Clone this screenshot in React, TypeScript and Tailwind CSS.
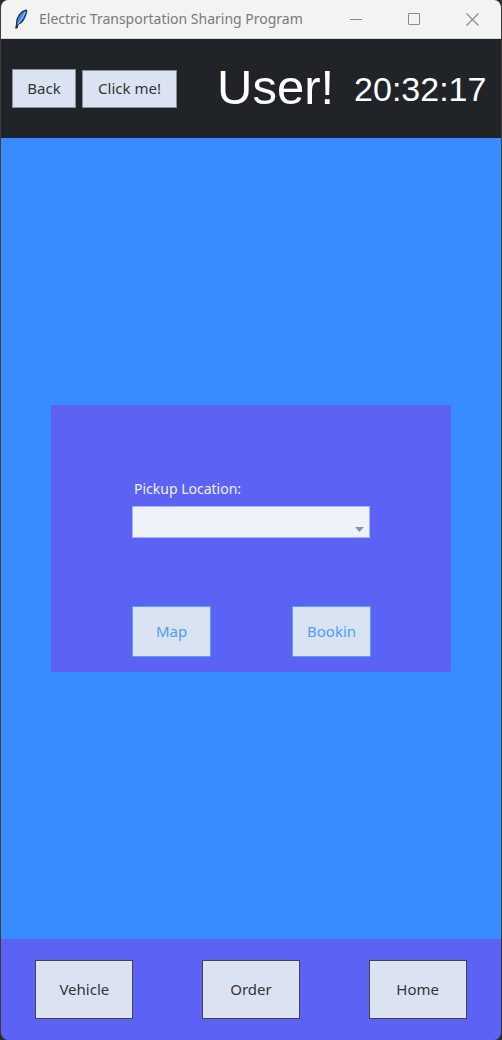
import React from "react";

function Feather() {
  return (
    <svg width="14" height="20" viewBox="0 0 14 20">
      <path d="M12 1 C6.5 2.5 2.5 8 2.6 14.5 L1.8 19 L3 19 L4 15.5 C9 13.5 11.5 8.5 12.8 1.8 Z" fill="#3b86ec" stroke="#17223a" strokeWidth="1.1" strokeLinejoin="round" />
      <path d="M11.5 2.8 L4 15.5" stroke="#a7d0ff" strokeWidth="0.9" />
    </svg>
  );
}

export default function App() {
  const ui = { fontFamily: '"Noto Sans", "Open Sans", sans-serif' };
  const arial = { fontFamily: '"Liberation Sans", Arial, sans-serif' };
  return (
    <div className="w-[502px] h-[1040px] bg-[#2a2a2a]">
      <div className="w-full h-full flex flex-col rounded-t-[8px] rounded-b-[8px] overflow-hidden border-x border-[#3d3d3d]" style={ui}>
        {/* Title bar */}
        <div className="h-[39px] shrink-0 bg-[#f3f3f3] border-b border-[#d6d6d6] flex items-center">
          <div className="w-[38px] flex justify-center pl-[2px]">
            <Feather />
          </div>
          <div className="text-[14px] text-[#7a7a7a] leading-none">Electric Transportation Sharing Program</div>
          <div className="flex-1" />
          <div className="flex items-center h-full">
            <div className="w-[58px] flex justify-center">
              <div className="w-[12px] h-[1px] bg-[#8a8a8a]" />
            </div>
            <div className="w-[58px] flex justify-center">
              <div className="w-[12px] h-[12px] border border-[#8a8a8a] rounded-[1px]" />
            </div>
            <div className="w-[58px] flex justify-center">
              <svg width="13" height="13" viewBox="0 0 13 13">
                <path d="M0.5 0.5 L12.5 12.5 M12.5 0.5 L0.5 12.5" stroke="#8a8a8a" strokeWidth="1.1" />
              </svg>
            </div>
          </div>
        </div>

        {/* Header */}
        <div className="h-[99px] shrink-0 bg-[#202328] flex items-center pl-[11px]">
          <button className="w-[64px] h-[39px] bg-[#dbe3f3] border border-[#8a8f99] text-[15px] text-[#333]">Back</button>
          <button className="ml-[6px] w-[95px] h-[38px] bg-[#dbe3f3] border border-[#8a8f99] text-[15px] text-[#333]">Click me!</button>
          <div className="ml-[40px] text-[49px] leading-none text-white pb-[2px]" style={arial}>User!</div>
          <div className="ml-[20px] text-[34px] leading-none text-white" style={arial}>20:32:17</div>
        </div>

        {/* Main */}
        <div className="flex-1 bg-[#388cff] flex items-center justify-center">
          <div className="w-[400px] h-[267px] bg-[#5c63f4] flex flex-col pl-[81px] pt-[74px]">
            <div className="pl-[2px] text-[14px] leading-[20px] text-[#eef0ff]">Pickup Location:</div>
            <div className="mt-[7px] w-[238px] h-[32px] bg-[#eef3f9] border border-[#a9b0ff] relative">
              <svg className="absolute right-[5px] bottom-[5px]" width="9" height="5" viewBox="0 0 9 5">
                <path d="M0 0 L9 0 L4.5 5 Z" fill="#8890b4" />
              </svg>
            </div>
            <div className="mt-[68px] flex">
              <button className="w-[79px] h-[51px] bg-[#dae3f2] border border-[#4ca3ff] text-[15px] text-[#4d9cff]">Map</button>
              <button className="ml-[81px] w-[79px] h-[51px] bg-[#dae3f2] border border-[#4ca3ff] text-[15px] text-[#4d9cff] flex items-center pl-[14px] whitespace-nowrap">
                Bookin
              </button>
            </div>
          </div>
        </div>

        {/* Footer */}
        <div className="h-[101px] shrink-0 bg-[#5c63f4] grid grid-cols-3 items-center">
          {["Vehicle", "Order", "Home"].map((t) => (
            <div key={t} className="flex justify-center">
              <button className="w-[98px] h-[59px] bg-[#dbe3f2] border border-[#444] text-[15px] text-[#333]">{t}</button>
            </div>
          ))}
        </div>
      </div>
    </div>
  );
}
